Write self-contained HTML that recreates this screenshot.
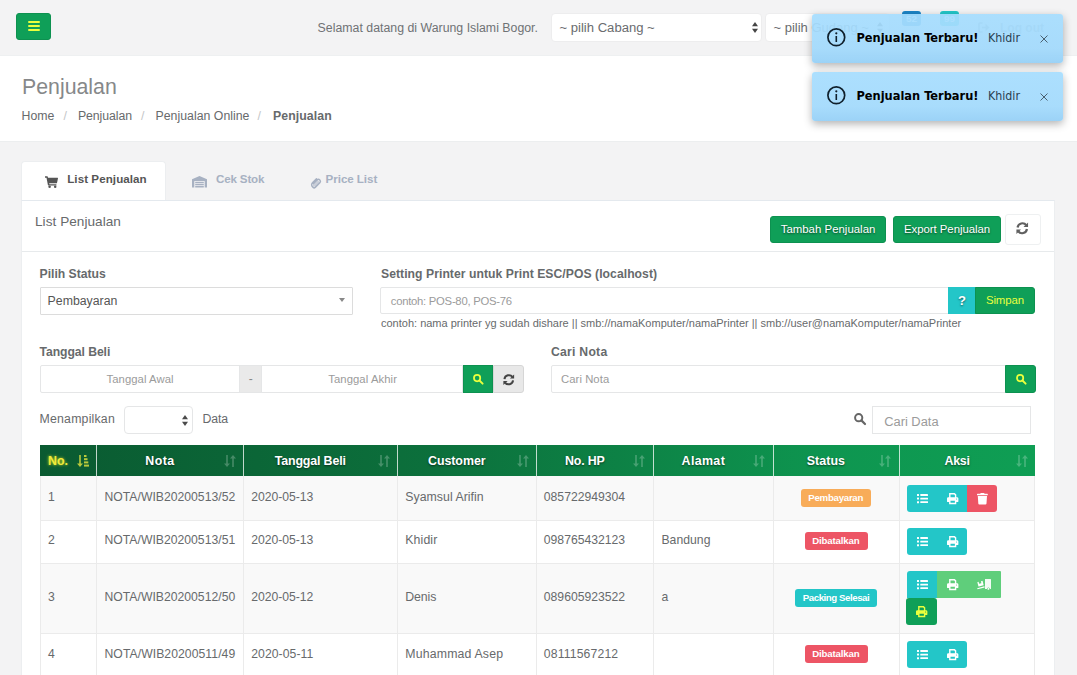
<!DOCTYPE html>
<html lang="id">
<head>
<meta charset="utf-8">
<title>Penjualan</title>
<style>
*{box-sizing:border-box;margin:0;padding:0}
html,body{width:1077px;height:675px;overflow:hidden;background:#f3f3f4}
body{font-family:"Liberation Sans","DejaVu Sans",sans-serif;font-size:12.3px;color:#676a6c;position:relative}
.a{position:absolute}
.t{position:absolute;white-space:pre;line-height:1}
svg{position:absolute;overflow:visible}
#nav{left:0;top:0;width:1077px;height:56px;background:#f3f3f4;border-bottom:1px solid #eef0f1}
#burger{left:16px;top:13px;width:35px;height:27px;background:#0f9f58;border:1px solid #0d9150;border-radius:3px}
#burger i{position:absolute;left:11px;width:12px;height:2px;background:#eaff3d;border-radius:1px}
.sel{position:absolute;background:#fff;border:1px solid #ededee;border-radius:4px}
#head{left:0;top:56px;width:1077px;height:86px;background:#fff;border-bottom:1px solid #eceeef}
#tabA{left:21px;top:161px;width:145px;height:40px;background:#fff;border:1px solid #eceef0;border-bottom:none;border-radius:4px 4px 0 0}
#panel{left:21px;top:200px;width:1034px;height:480px;background:#fff;border:1px solid #eceef0;border-top-color:#e4e9ee}
.btn{position:absolute;border-radius:3px}
.g{background:#0f9f58;border:1px solid #0d9150}
.inp{position:absolute;background:#fff;border:1px solid #e5e6e7}
#thead{left:40px;top:445px;width:995px;height:31px;background:linear-gradient(90deg,#0a5a31 0%,#0c703c 40%,#0e9650 80%,#0f9e54 100%)}
.th{position:absolute;top:0;height:31px;width:1px;background:rgba(255,255,255,.75)}
.hs{text-shadow:0 1px 2px rgba(0,0,0,.55)}
.row{position:absolute;left:40px;width:995px;border-bottom:1px solid #ebebeb;border-left:1px solid #ebebeb;border-right:1px solid #ebebeb}
.c{position:absolute;top:0;bottom:0;width:1px;background:#ebebeb}
.badge{position:absolute;height:18px;border-radius:3px}
.ab{position:absolute;height:27px}
.toast{position:absolute;width:251px;height:48px;background:linear-gradient(180deg,rgba(166,221,254,.93) 0%,rgba(163,218,252,.94) 70%,rgba(150,208,246,.95) 100%);border-radius:3px;box-shadow:0 3px 8px rgba(0,0,0,.3)}
</style>
</head>
<body>
<div id="nav" class="a"></div>
<div id="burger" class="a"><i style="top:7px"></i><i style="top:11px"></i><i style="top:15px"></i></div>
<div class="t" style="left:317.6px;top:22px;font-size:12.3px;color:#6f7275;letter-spacing:0.02px;">Selamat datang di Warung Islami Bogor.</div>
<div class="sel" style="left:551px;top:13px;width:211px;height:29px"></div>
<div class="t" style="left:559.5px;top:21px;font-size:13.08px;color:#6a6c6f;">~ pilih Cabang ~</div>
<svg style="left:752px;top:21.5px" width="6" height="11" viewBox="0 0 6 11" ><g fill="#444"><path d="M3 0l3 4.200H0z"/><path d="M3 11L0 6.800h6z"/></g></svg>
<div class="sel" style="left:765px;top:13px;width:125px;height:29px"></div>
<div class="t" style="left:773.5px;top:21px;font-size:13.01px;color:#6a6c6f;">~ pilih Gudang ~</div>
<svg style="left:877px;top:21.5px" width="6" height="11" viewBox="0 0 6 11" ><g fill="#444"><path d="M3 0l3 4.200H0z"/><path d="M3 11L0 6.800h6z"/></g></svg>
<div class="a" style="left:902px;top:11px;width:19px;height:15px;background:#1c84c6;border-radius:3px"></div>
<div class="t" style="left:906px;top:14px;font-size:9.89px;color:#fff;font-weight:bold;">52</div>
<div class="a" style="left:940px;top:11px;width:19px;height:15px;background:#23c6c8;border-radius:3px"></div>
<div class="t" style="left:944px;top:14px;font-size:9.89px;color:#fff;font-weight:bold;">99</div>
<div class="t" style="left:1000px;top:22px;font-size:12px;color:#999c9e;font-weight:bold;">Log out</div>
<svg style="left:978px;top:22px" width="12" height="11" viewBox="0 0 12 11" ><g fill="none" stroke="#999c9e" stroke-width="1.600"><path d="M4.500 1H1.800a.8.800 0 0 0-.8.800v7.400a.8.800 0 0 0 .8.800h2.700"/><path d="M4 5.500h6"/></g><path fill="#999c9e" d="M7.500 1.800l4 3.700-4 3.700z"/></svg>
<div id="head" class="a"></div>
<div class="t" style="left:22px;top:77px;font-size:21.3px;color:#86888a;letter-spacing:0.01px;">Penjualan</div>
<div class="t" style="left:21.5px;top:110px;font-size:12.3px;color:#676a6c;">Home</div>
<div class="t" style="left:63.5px;top:110px;font-size:12.3px;color:#c4c6c8;letter-spacing:0.58px;">/</div>
<div class="t" style="left:78px;top:110px;font-size:12.3px;color:#676a6c;letter-spacing:-0.09px;">Penjualan</div>
<div class="t" style="left:141px;top:110px;font-size:12.3px;color:#c4c6c8;letter-spacing:0.58px;">/</div>
<div class="t" style="left:155.5px;top:110px;font-size:12.3px;color:#676a6c;letter-spacing:0.02px;">Penjualan Online</div>
<div class="t" style="left:257.5px;top:110px;font-size:12.3px;color:#c4c6c8;letter-spacing:0.58px;">/</div>
<div class="t" style="left:273px;top:110px;font-size:12.3px;color:#676a6c;font-weight:bold;letter-spacing:0.07px;">Penjualan</div>
<div id="tabA" class="a"></div>
<svg style="left:45px;top:175.7px" width="13" height="12" viewBox="0 0 13 12" ><g fill="#555"><path d="M0 0.300h2.300a.5.5 0 0 1 .5.400l.2 1h9.600a.4.4 0 0 1 .4.500l-1 4.700a.5.5 0 0 1-.5.400H4.200l.2 1h6.600a.5.5 0 0 1 .5.600l-.1.500H3.400a.5.5 0 0 1-.5-.4L1.500 1.800H0z"/><circle cx="4.600" cy="10.700" r="1.250"/><circle cx="10.200" cy="10.700" r="1.250"/></g></svg>
<div class="t" style="left:67.2px;top:173px;font-size:11.6px;color:#555;font-weight:bold;letter-spacing:0.07px;">List Penjualan</div>
<svg style="left:192px;top:176.3px" width="15" height="11.5" viewBox="0 0 15 11.5" ><g fill="#a7b1c2"><path d="M7.500 0L15 3.200V11.500h-2.300V5.300a.4.400 0 0 0-.4-.4H2.700a.4.400 0 0 0-.4.400v6.200H0V3.200z"/><rect x="3.200" y="5.800" width="8.600" height="1.300"/><rect x="3.200" y="7.800" width="8.600" height="1.300"/><rect x="3.200" y="9.800" width="8.600" height="1.700"/></g></svg>
<div class="t" style="left:216px;top:173px;font-size:11.6px;color:#a7b1c2;font-weight:bold;letter-spacing:-0.16px;">Cek Stok</div>
<svg style="left:310px;top:177px" width="11" height="11.5" viewBox="0 0 11 11.5" ><g fill="none" stroke="#a7b1c2" stroke-width="1.500" stroke-linecap="round"><path d="M3.500 6.500L7.200 2.800a2 2 0 0 1 2.800 2.800L5.200 10.400a1.500 1.500 0 0 1-2.100 0L2.500 9.800A2.800 2.800 0 0 1 2.500 5.800L6.500 1.800"/></g><path fill="#a7b1c2" opacity=".55" d="M3 6.500l4-4 2.600 2.600-4.300 4.400H3z"/></svg>
<div class="t" style="left:325.6px;top:173px;font-size:11.6px;color:#a7b1c2;font-weight:bold;letter-spacing:-0.06px;">Price List</div>
<div id="panel" class="a"></div>
<div class="t" style="left:35px;top:215px;font-size:13.6px;color:#676a6c;letter-spacing:0.04px;">List Penjualan</div>
<div class="a" style="left:22px;top:251px;width:1032px;height:1px;background:#e7eaec"></div>
<div class="btn g" style="left:770px;top:216px;width:116px;height:27px"></div>
<div class="t hs" style="left:780.7px;top:224px;font-size:11.4px;color:#fff;letter-spacing:0.02px;">Tambah Penjualan</div>
<div class="btn g" style="left:893px;top:216px;width:108px;height:27px"></div>
<div class="t hs" style="left:904px;top:224px;font-size:11.4px;color:#fff;letter-spacing:-0.04px;">Export Penjualan</div>
<div class="btn" style="left:1005px;top:214px;width:36px;height:31px;background:#fff;border:1px solid #eef0f1"></div>
<svg style="left:1015.7px;top:222.3px" width="12.5" height="12.5" viewBox="0 0 12 12" ><g fill="none" stroke="#606060" stroke-width="2.100"><path d="M1.5 5.300A4.700 4.700 0 0 1 9.900 3.100"/><path d="M10.500 6.700A4.700 4.700 0 0 1 2.100 8.900"/></g><g fill="#606060"><path d="M11.6 0.400v4.400H7.200z"/><path d="M0.400 11.600V7.200h4.400z"/></g></svg>
<div class="t" style="left:39.6px;top:268px;font-size:12.2px;color:#676a6c;font-weight:bold;letter-spacing:-0.02px;">Pilih Status</div>
<div class="inp" style="left:40px;top:287px;width:313px;height:28px;border-color:#dcdcdc;border-radius:1px"></div>
<div class="t" style="left:47.6px;top:295px;font-size:12.3px;color:#555;">Pembayaran</div>
<div class="a" style="left:339.3px;top:298.2px;border:3.7px solid transparent;border-top:4.3px solid #888;border-bottom:none"></div>
<div class="t" style="left:381px;top:268px;font-size:12.2px;color:#676a6c;font-weight:bold;letter-spacing:0.04px;">Setting Printer untuk Print ESC/POS (localhost)</div>
<div class="inp" style="left:380px;top:287px;width:569px;height:27px;border-radius:2px 0 0 2px"></div>
<div class="t" style="left:390.8px;top:296px;font-size:11.3px;color:#9b9b9b;letter-spacing:-0.27px;">contoh: POS-80, POS-76</div>
<div class="btn" style="left:948px;top:287px;width:28px;height:27px;background:#23c6c8;border-radius:0"></div>
<div class="t hs" style="left:958px;top:294px;font-size:13.09px;color:#fff;font-weight:bold;">?</div>
<div class="btn g" style="left:975px;top:287px;width:60px;height:27px;border-radius:0 3px 3px 0"></div>
<div class="t" style="left:986px;top:295px;font-size:11.4px;color:#eaff3d;letter-spacing:-0.13px;">Simpan</div>
<div class="t" style="left:381px;top:318px;font-size:11px;color:#676a6c;">contoh: nama printer yg sudah dishare || smb://namaKomputer/namaPrinter || smb://user@namaKomputer/namaPrinter</div>
<div class="t" style="left:39.6px;top:346px;font-size:12.2px;color:#676a6c;font-weight:bold;letter-spacing:-0.08px;">Tanggal Beli</div>
<div class="inp" style="left:40px;top:365px;width:200px;height:28px;border-radius:2px 0 0 2px"></div>
<div class="t" style="left:106.5px;top:374px;font-size:11.3px;color:#9b9b9b;letter-spacing:0.06px;">Tanggal Awal</div>
<div class="a" style="left:239px;top:365px;width:23px;height:28px;background:#eaeaea;border:1px solid #e5e6e7"></div>
<div class="t" style="left:248.7px;top:373px;font-size:12.01px;color:#888;">-</div>
<div class="inp" style="left:261px;top:365px;width:202px;height:28px"></div>
<div class="t" style="left:328.2px;top:374px;font-size:11.3px;color:#9b9b9b;letter-spacing:0.08px;">Tanggal Akhir</div>
<div class="btn g" style="left:462.5px;top:365px;width:30.5px;height:28px;border-radius:0"></div>
<svg style="left:472.5px;top:374px" width="10.5" height="10.5" viewBox="0 0 12 12" ><circle cx="4.7" cy="4.7" r="3.6" fill="none" stroke="#eaff3d" stroke-width="2"/><path d="M7.4 7.4L11 11" stroke="#eaff3d" stroke-width="2.2" stroke-linecap="round"/></svg>
<div class="btn" style="left:493px;top:365px;width:31px;height:28px;background:#e8e8e8;border:1px solid #d6d6d6;border-radius:0 3px 3px 0"></div>
<svg style="left:502.5px;top:373.5px" width="11.5" height="11.5" viewBox="0 0 12 12" ><g fill="none" stroke="#444" stroke-width="2.100"><path d="M1.5 5.300A4.700 4.700 0 0 1 9.900 3.100"/><path d="M10.500 6.700A4.700 4.700 0 0 1 2.100 8.900"/></g><g fill="#444"><path d="M11.6 0.400v4.400H7.200z"/><path d="M0.400 11.600V7.200h4.400z"/></g></svg>
<div class="t" style="left:551px;top:346px;font-size:12.2px;color:#676a6c;font-weight:bold;letter-spacing:0.25px;">Cari Nota</div>
<div class="inp" style="left:551px;top:365px;width:455px;height:28px;border-radius:2px 0 0 2px"></div>
<div class="t" style="left:561px;top:374px;font-size:11.3px;color:#9b9b9b;letter-spacing:0.06px;">Cari Nota</div>
<div class="btn g" style="left:1005px;top:365px;width:31px;height:28px;border-radius:0 3px 3px 0"></div>
<svg style="left:1015.5px;top:374px" width="10.5" height="10.5" viewBox="0 0 12 12" ><circle cx="4.7" cy="4.7" r="3.6" fill="none" stroke="#eaff3d" stroke-width="2"/><path d="M7.4 7.4L11 11" stroke="#eaff3d" stroke-width="2.2" stroke-linecap="round"/></svg>
<div class="t" style="left:39.6px;top:413px;font-size:12.3px;color:#676a6c;letter-spacing:0.2px;">Menampilkan</div>
<div class="inp" style="left:124px;top:406px;width:69px;height:28px;border-radius:4px"></div>
<svg style="left:181.7px;top:415px" width="6" height="11" viewBox="0 0 6 11" ><g fill="#4a4a4a"><path d="M3 0l3 4.200H0z"/><path d="M3 11L0 6.800h6z"/></g></svg>
<div class="t" style="left:202.5px;top:413px;font-size:12.3px;color:#676a6c;letter-spacing:-0.16px;">Data</div>
<svg style="left:854px;top:413.3px" width="12" height="12" viewBox="0 0 12 12" ><circle cx="4.7" cy="4.7" r="3.6" fill="none" stroke="#666" stroke-width="2"/><path d="M7.4 7.4L11 11" stroke="#666" stroke-width="2.2" stroke-linecap="round"/></svg>
<div class="inp" style="left:872px;top:406px;width:159px;height:28px"></div>
<div class="t" style="left:884.2px;top:416px;font-size:12.88px;color:#9b9b9b;">Cari Data</div>
<div id="thead" class="a"></div>
<div class="th" style="left:56px;margin-left:40px;top:445px"></div>
<div class="th" style="left:203px;margin-left:40px;top:445px"></div>
<div class="th" style="left:357px;margin-left:40px;top:445px"></div>
<div class="th" style="left:496px;margin-left:40px;top:445px"></div>
<div class="th" style="left:613px;margin-left:40px;top:445px"></div>
<div class="th" style="left:733px;margin-left:40px;top:445px"></div>
<div class="th" style="left:859px;margin-left:40px;top:445px"></div>
<div class="t" style="left:48px;top:455px;font-size:12.4px;color:#f0ea3c;font-weight:bold;letter-spacing:0.01px;text-shadow:0 0 3px #d8e020;">No.</div>
<svg style="left:77px;top:454.5px" width="12" height="12" viewBox="0 0 12 12" style="filter:drop-shadow(0 0 2px #d8e020)"><g fill="#b9c93c"><path d="M2.200 0h1.600v8.500H6L3 12 0 8.500h2.200z"/><rect x="7" y="0" width="2.500" height="2"/><rect x="7" y="3.200" width="3.500" height="2"/><rect x="7" y="6.400" width="4.300" height="2"/><rect x="7" y="9.600" width="5" height="2"/></g></svg>
<div class="t hs" style="left:145.3px;top:455px;font-size:12.4px;color:#fff;font-weight:bold;letter-spacing:0.45px;">Nota</div>
<svg style="left:224px;top:454.5px" width="12" height="12" viewBox="0 0 12 12" ><g fill="#fff" opacity="0.24"><path d="M2.200 0h1.600v8.500H6L3 12 0 8.500h2.200z"/><path d="M8.200 12h1.600V3.500H12L9 0 6 3.500h2.200z"/></g></svg>
<div class="t hs" style="left:274.8px;top:455px;font-size:12.4px;color:#fff;font-weight:bold;letter-spacing:-0.15px;">Tanggal Beli</div>
<svg style="left:377.5px;top:454.5px" width="12" height="12" viewBox="0 0 12 12" ><g fill="#fff" opacity="0.24"><path d="M2.200 0h1.600v8.500H6L3 12 0 8.500h2.200z"/><path d="M8.200 12h1.600V3.500H12L9 0 6 3.500h2.200z"/></g></svg>
<div class="t hs" style="left:428px;top:455px;font-size:12.4px;color:#fff;font-weight:bold;letter-spacing:-0.04px;">Customer</div>
<svg style="left:516.5px;top:454.5px" width="12" height="12" viewBox="0 0 12 12" ><g fill="#fff" opacity="0.24"><path d="M2.200 0h1.600v8.500H6L3 12 0 8.500h2.200z"/><path d="M8.200 12h1.600V3.500H12L9 0 6 3.500h2.200z"/></g></svg>
<div class="t hs" style="left:565px;top:455px;font-size:12.4px;color:#fff;font-weight:bold;letter-spacing:-0.19px;">No. HP</div>
<svg style="left:633px;top:454.5px" width="12" height="12" viewBox="0 0 12 12" ><g fill="#fff" opacity="0.24"><path d="M2.200 0h1.600v8.500H6L3 12 0 8.500h2.200z"/><path d="M8.200 12h1.600V3.500H12L9 0 6 3.500h2.200z"/></g></svg>
<div class="t hs" style="left:681.6px;top:455px;font-size:12.4px;color:#fff;font-weight:bold;letter-spacing:0.37px;">Alamat</div>
<svg style="left:753px;top:454.5px" width="12" height="12" viewBox="0 0 12 12" ><g fill="#fff" opacity="0.24"><path d="M2.200 0h1.600v8.500H6L3 12 0 8.500h2.200z"/><path d="M8.200 12h1.600V3.500H12L9 0 6 3.500h2.200z"/></g></svg>
<div class="t hs" style="left:806.8px;top:455px;font-size:12.4px;color:#fff;font-weight:bold;letter-spacing:0.06px;">Status</div>
<svg style="left:879px;top:454.5px" width="12" height="12" viewBox="0 0 12 12" ><g fill="#fff" opacity="0.24"><path d="M2.200 0h1.600v8.500H6L3 12 0 8.500h2.200z"/><path d="M8.200 12h1.600V3.500H12L9 0 6 3.500h2.200z"/></g></svg>
<div class="t hs" style="left:944.4px;top:455px;font-size:12.4px;color:#fff;font-weight:bold;letter-spacing:-0.2px;">Aksi</div>
<svg style="left:1015.5px;top:454.5px" width="12" height="12" viewBox="0 0 12 12" ><g fill="#fff" opacity="0.24"><path d="M2.200 0h1.600v8.500H6L3 12 0 8.500h2.200z"/><path d="M8.200 12h1.600V3.500H12L9 0 6 3.500h2.200z"/></g></svg>
<div class="row" style="top:476px;height:45px;background:#f9f9f9"><div class="c" style="left:55px"></div><div class="c" style="left:202px"></div><div class="c" style="left:356px"></div><div class="c" style="left:495px"></div><div class="c" style="left:612px"></div><div class="c" style="left:732px"></div><div class="c" style="left:858px"></div></div>
<div class="row" style="top:521px;height:43px;background:#fff"><div class="c" style="left:55px"></div><div class="c" style="left:202px"></div><div class="c" style="left:356px"></div><div class="c" style="left:495px"></div><div class="c" style="left:612px"></div><div class="c" style="left:732px"></div><div class="c" style="left:858px"></div></div>
<div class="row" style="top:564px;height:70px;background:#f9f9f9"><div class="c" style="left:55px"></div><div class="c" style="left:202px"></div><div class="c" style="left:356px"></div><div class="c" style="left:495px"></div><div class="c" style="left:612px"></div><div class="c" style="left:732px"></div><div class="c" style="left:858px"></div></div>
<div class="row" style="top:634px;height:45px;background:#fff"><div class="c" style="left:55px"></div><div class="c" style="left:202px"></div><div class="c" style="left:356px"></div><div class="c" style="left:495px"></div><div class="c" style="left:612px"></div><div class="c" style="left:732px"></div><div class="c" style="left:858px"></div></div>
<div class="t" style="left:48px;top:491px;font-size:12.2px;color:#676a6c;letter-spacing:0.01px;">1</div>
<div class="t" style="left:104.5px;top:491px;font-size:12.2px;color:#676a6c;letter-spacing:0.01px;">NOTA/WIB20200513/52</div>
<div class="t" style="left:251.2px;top:491px;font-size:12.2px;color:#676a6c;letter-spacing:-0.02px;">2020-05-13</div>
<div class="t" style="left:405.3px;top:491px;font-size:12.3px;color:#676a6c;letter-spacing:0.03px;">Syamsul Arifin</div>
<div class="t" style="left:543.8px;top:491px;font-size:12.2px;color:#676a6c;">085722949304</div>
<div class="t" style="left:48px;top:534px;font-size:12.2px;color:#676a6c;letter-spacing:0.01px;">2</div>
<div class="t" style="left:104.5px;top:534px;font-size:12.2px;color:#676a6c;letter-spacing:0.01px;">NOTA/WIB20200513/51</div>
<div class="t" style="left:251.2px;top:534px;font-size:12.2px;color:#676a6c;letter-spacing:-0.02px;">2020-05-13</div>
<div class="t" style="left:405.3px;top:534px;font-size:12.3px;color:#676a6c;letter-spacing:0.11px;">Khidir</div>
<div class="t" style="left:543.8px;top:534px;font-size:12.2px;color:#676a6c;">098765432123</div>
<div class="t" style="left:661.4px;top:534px;font-size:12.2px;color:#676a6c;letter-spacing:0.04px;">Bandung</div>
<div class="t" style="left:48px;top:591px;font-size:12.2px;color:#676a6c;letter-spacing:0.01px;">3</div>
<div class="t" style="left:104.5px;top:591px;font-size:12.2px;color:#676a6c;letter-spacing:0.01px;">NOTA/WIB20200512/50</div>
<div class="t" style="left:251.2px;top:591px;font-size:12.2px;color:#676a6c;letter-spacing:-0.02px;">2020-05-12</div>
<div class="t" style="left:405.3px;top:591px;font-size:12.3px;color:#676a6c;letter-spacing:-0.11px;">Denis</div>
<div class="t" style="left:543.8px;top:591px;font-size:12.2px;color:#676a6c;">089605923522</div>
<div class="t" style="left:661.4px;top:591px;font-size:12.2px;color:#676a6c;letter-spacing:-0.59px;">a</div>
<div class="t" style="left:48px;top:648px;font-size:12.2px;color:#676a6c;letter-spacing:0.01px;">4</div>
<div class="t" style="left:104.5px;top:648px;font-size:12.2px;color:#676a6c;letter-spacing:0.06px;">NOTA/WIB20200511/49</div>
<div class="t" style="left:251.2px;top:648px;font-size:12.2px;color:#676a6c;letter-spacing:0.08px;">2020-05-11</div>
<div class="t" style="left:405.3px;top:648px;font-size:12.3px;color:#676a6c;letter-spacing:0.17px;">Muhammad Asep</div>
<div class="t" style="left:543.8px;top:648px;font-size:12.2px;color:#676a6c;letter-spacing:0.16px;">08111567212</div>
<div class="badge" style="left:801px;top:489px;width:70px;background:#f8ac59"></div>
<div class="t" style="left:808.3px;top:493px;font-size:9.7px;color:#fff;font-weight:bold;letter-spacing:-0.28px;">Pembayaran</div>
<div class="badge" style="left:805px;top:532px;width:63px;background:#ed5565"></div>
<div class="t" style="left:812.3px;top:536px;font-size:9.7px;color:#fff;font-weight:bold;letter-spacing:-0.18px;">Dibatalkan</div>
<div class="badge" style="left:795.3px;top:588.6px;width:81.7px;background:#23c6c8"></div>
<div class="t" style="left:802.8px;top:593px;font-size:9.7px;color:#fff;font-weight:bold;letter-spacing:-0.45px;">Packing Selesai</div>
<div class="badge" style="left:805px;top:645px;width:63px;background:#ed5565"></div>
<div class="t" style="left:812.3px;top:649px;font-size:9.7px;color:#fff;font-weight:bold;letter-spacing:-0.18px;">Dibatalkan</div>
<div class="ab" style="left:907px;top:485px;width:60px;background:#23c6c8;border-radius:3px 0 0 3px"></div>
<div class="ab" style="left:967px;top:485px;width:30px;background:#ed5565;border-radius:0 3px 3px 0"></div>
<svg style="left:917px;top:493.6px" width="11" height="9.2" viewBox="0 0 11 9.2" ><g fill="#fff"><rect x="0" y="0" width="2" height="2" rx=".3"/><rect x="3.3" y="0.1" width="7.7" height="1.8" rx=".3"/><rect x="0" y="3.6" width="2" height="2" rx=".3"/><rect x="3.3" y="3.7" width="7.7" height="1.8" rx=".3"/><rect x="0" y="7.2" width="2" height="2" rx=".3"/><rect x="3.3" y="7.3" width="7.7" height="1.8" rx=".3"/></g></svg>
<svg style="left:947px;top:492.8px" width="11.4" height="11.2" viewBox="0 0 11.4 11.2" ><path fill="#fff" fill-rule="evenodd" d="M2.1 0h5.6l1.6 1.6V4.2H7.9V2.3L7.1 1.4H3.5v2.8H2.1zM1.4 4.2h8.6a1.4 1.4 0 0 1 1.4 1.4v2.9a.4.4 0 0 1-.4.4H9.3v2a.3.3 0 0 1-.3.3H2.4a.3.3 0 0 1-.3-.3v-2H.4a.4.4 0 0 1-.4-.4V5.6a1.4 1.4 0 0 1 1.4-1.4zM3.5 7.7v2.1h4.4V7.7zM9.6 5.5a.55.55 0 1 0 0 1.1.55.55 0 0 0 0-1.1z"/></svg>
<svg style="left:976.8px;top:492.5px" width="10.8" height="11.5" viewBox="0 0 10.8 11.5" ><path fill="#fff" d="M3.7 0h3.4l.5.8h2.8a.4.4 0 0 1 .4.4v.7a.3.3 0 0 1-.3.3H.3a.3.3 0 0 1-.3-.3v-.7a.4.4 0 0 1 .4-.4h2.8zM.8 2.9h9.2l-.5 7.7a1 1 0 0 1-1 .9H2.3a1 1 0 0 1-1-.9z"/></svg>
<div class="ab" style="left:907px;top:528px;width:60px;background:#23c6c8;border-radius:3px"></div>
<svg style="left:917px;top:536.6px" width="11" height="9.2" viewBox="0 0 11 9.2" ><g fill="#fff"><rect x="0" y="0" width="2" height="2" rx=".3"/><rect x="3.3" y="0.1" width="7.7" height="1.8" rx=".3"/><rect x="0" y="3.6" width="2" height="2" rx=".3"/><rect x="3.3" y="3.7" width="7.7" height="1.8" rx=".3"/><rect x="0" y="7.2" width="2" height="2" rx=".3"/><rect x="3.3" y="7.3" width="7.7" height="1.8" rx=".3"/></g></svg>
<svg style="left:947px;top:535.8px" width="11.4" height="11.2" viewBox="0 0 11.4 11.2" ><path fill="#fff" fill-rule="evenodd" d="M2.1 0h5.6l1.6 1.6V4.2H7.9V2.3L7.1 1.4H3.5v2.8H2.1zM1.4 4.2h8.6a1.4 1.4 0 0 1 1.4 1.4v2.9a.4.4 0 0 1-.4.4H9.3v2a.3.3 0 0 1-.3.3H2.4a.3.3 0 0 1-.3-.3v-2H.4a.4.4 0 0 1-.4-.4V5.6a1.4 1.4 0 0 1 1.4-1.4zM3.5 7.7v2.1h4.4V7.7zM9.6 5.5a.55.55 0 1 0 0 1.1.55.55 0 0 0 0-1.1z"/></svg>
<div class="ab" style="left:907px;top:571px;width:30px;background:#23c6c8;border-radius:3px 0 0 0"></div>
<div class="ab" style="left:937px;top:571px;width:64px;background:#5fce7b;border-radius:0 1px 1px 0"></div>
<svg style="left:917px;top:579.6px" width="11" height="9.2" viewBox="0 0 11 9.2" ><g fill="#fff"><rect x="0" y="0" width="2" height="2" rx=".3"/><rect x="3.3" y="0.1" width="7.7" height="1.8" rx=".3"/><rect x="0" y="3.6" width="2" height="2" rx=".3"/><rect x="3.3" y="3.7" width="7.7" height="1.8" rx=".3"/><rect x="0" y="7.2" width="2" height="2" rx=".3"/><rect x="3.3" y="7.3" width="7.7" height="1.8" rx=".3"/></g></svg>
<svg style="left:947px;top:578.8px" width="11.4" height="11.2" viewBox="0 0 11.4 11.2" ><path fill="#fff" fill-rule="evenodd" d="M2.1 0h5.6l1.6 1.6V4.2H7.9V2.3L7.1 1.4H3.5v2.8H2.1zM1.4 4.2h8.6a1.4 1.4 0 0 1 1.4 1.4v2.9a.4.4 0 0 1-.4.4H9.3v2a.3.3 0 0 1-.3.3H2.4a.3.3 0 0 1-.3-.3v-2H.4a.4.4 0 0 1-.4-.4V5.6a1.4 1.4 0 0 1 1.4-1.4zM3.5 7.7v2.1h4.4V7.7zM9.6 5.5a.55.55 0 1 0 0 1.1.55.55 0 0 0 0-1.1z"/></svg>
<svg style="left:977px;top:578.5px" width="14" height="10.8" viewBox="0 0 14 10.8" ><g fill="#fff"><path opacity=".92" d="M8 0h5.400a.6.6 0 0 1 .6.6V9.400a.6.6 0 0 1-.6.6h-.5a1.500 1.500 0 0 0-3 0H8z"/><circle cx="11.400" cy="9.900" r=".9"/><path d="M.3 3.200l1.300-.35.5 1.900 2.300-.6-.5-1.900 1.300-.35a.3.3 0 0 1 .4.200l1 3.800a.3.3 0 0 1-.2.400L1.800 7.500a.3.3 0 0 1-.4-.2l-1-3.800a.3.3 0 0 1-.1-.3z"/><path d="M.2 9.200l7.200-1.900.3 1.100-7.200 1.900z"/></g></svg>
<div class="ab" style="left:906px;top:598.3px;width:31px;background:#0f9f58;border-radius:3px"></div>
<svg style="left:916px;top:606.3px" width="11.4" height="11.2" viewBox="0 0 11.4 11.2" ><path fill="#eaff3d" fill-rule="evenodd" d="M2.1 0h5.6l1.6 1.6V4.2H7.9V2.3L7.1 1.4H3.5v2.8H2.1zM1.4 4.2h8.6a1.4 1.4 0 0 1 1.4 1.4v2.9a.4.4 0 0 1-.4.4H9.3v2a.3.3 0 0 1-.3.3H2.4a.3.3 0 0 1-.3-.3v-2H.4a.4.4 0 0 1-.4-.4V5.6a1.4 1.4 0 0 1 1.4-1.4zM3.5 7.7v2.1h4.4V7.7zM9.6 5.5a.55.55 0 1 0 0 1.1.55.55 0 0 0 0-1.1z"/></svg>
<div class="ab" style="left:907px;top:641px;width:60px;background:#23c6c8;border-radius:3px"></div>
<svg style="left:917px;top:649.6px" width="11" height="9.2" viewBox="0 0 11 9.2" ><g fill="#fff"><rect x="0" y="0" width="2" height="2" rx=".3"/><rect x="3.3" y="0.1" width="7.7" height="1.8" rx=".3"/><rect x="0" y="3.6" width="2" height="2" rx=".3"/><rect x="3.3" y="3.7" width="7.7" height="1.8" rx=".3"/><rect x="0" y="7.2" width="2" height="2" rx=".3"/><rect x="3.3" y="7.3" width="7.7" height="1.8" rx=".3"/></g></svg>
<svg style="left:947px;top:648.8px" width="11.4" height="11.2" viewBox="0 0 11.4 11.2" ><path fill="#fff" fill-rule="evenodd" d="M2.1 0h5.6l1.6 1.6V4.2H7.9V2.3L7.1 1.4H3.5v2.8H2.1zM1.4 4.2h8.6a1.4 1.4 0 0 1 1.4 1.4v2.9a.4.4 0 0 1-.4.4H9.3v2a.3.3 0 0 1-.3.3H2.4a.3.3 0 0 1-.3-.3v-2H.4a.4.4 0 0 1-.4-.4V5.6a1.4 1.4 0 0 1 1.4-1.4zM3.5 7.7v2.1h4.4V7.7zM9.6 5.5a.55.55 0 1 0 0 1.1.55.55 0 0 0 0-1.1z"/></svg>
<div class="toast" style="left:812px;top:14px;height:48.5px"></div>
<svg style="left:827.4px;top:28.4px" width="18.6" height="18.6" viewBox="0 0 18.6 18.6" ><circle cx="9.3" cy="9.3" r="8.400" fill="none" stroke="#10202c" stroke-width="1.700"/><rect x="8.500" y="8" width="1.600" height="6" fill="#10202c"/><circle cx="9.3" cy="5.300" r="1.100" fill="#10202c"/></svg>
<div class="t" style="left:856.4px;top:32px;font-size:12.7px;color:#000;font-weight:bold;font-family:'DejaVu Sans Condensed','Liberation Sans',sans-serif;letter-spacing:0.01px;">Penjualan Terbaru!</div>
<div class="t" style="left:988px;top:32px;font-size:12.3px;color:#2a4050;font-family:'DejaVu Sans Condensed','Liberation Sans',sans-serif;">Khidir</div>
<svg style="left:1040px;top:34.9px" width="8" height="8" viewBox="0 0 8 8" ><path d="M.5.5l7 7M7.500.5l-7 7" stroke="#4a6070" stroke-width="1" fill="none"/></svg>
<div class="toast" style="left:812px;top:72px;height:49px"></div>
<svg style="left:827.4px;top:86.4px" width="18.6" height="18.6" viewBox="0 0 18.6 18.6" ><circle cx="9.3" cy="9.3" r="8.400" fill="none" stroke="#10202c" stroke-width="1.700"/><rect x="8.500" y="8" width="1.600" height="6" fill="#10202c"/><circle cx="9.3" cy="5.300" r="1.100" fill="#10202c"/></svg>
<div class="t" style="left:856.4px;top:90px;font-size:12.7px;color:#000;font-weight:bold;font-family:'DejaVu Sans Condensed','Liberation Sans',sans-serif;letter-spacing:0.01px;">Penjualan Terbaru!</div>
<div class="t" style="left:988px;top:90px;font-size:12.3px;color:#2a4050;font-family:'DejaVu Sans Condensed','Liberation Sans',sans-serif;">Khidir</div>
<svg style="left:1040px;top:92.9px" width="8" height="8" viewBox="0 0 8 8" ><path d="M.5.5l7 7M7.500.5l-7 7" stroke="#4a6070" stroke-width="1" fill="none"/></svg>
</body>
</html>
